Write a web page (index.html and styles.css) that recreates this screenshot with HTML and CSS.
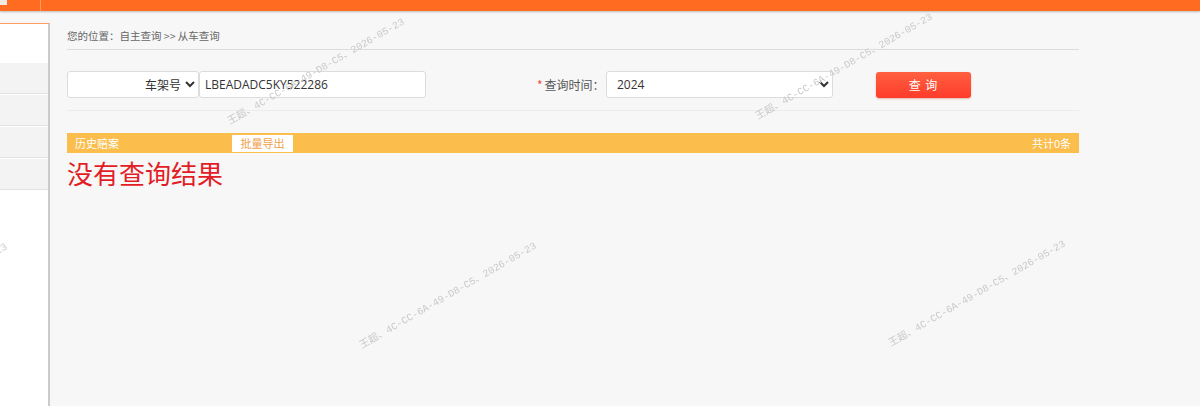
FILE: index.html
```html
<!DOCTYPE html>
<html lang="zh-CN">
<head>
    <meta charset="UTF-8">
    <meta name="viewport" content="width=device-width, initial-scale=1.0">
    <title>从车查询</title>
    <link rel="stylesheet" href="styles.css">
</head>
<body>
    <header class="topbar">
        <span class="topbar-logo"></span>
        <span class="topbar-sep"></span>
    </header>

    <div class="layout">
        <!-- 左侧菜单 -->
        <aside class="sidebar">
            <div class="menu-head"></div>
            <ul class="menu">
                <li></li>
                <li></li>
                <li></li>
                <li></li>
            </ul>
        </aside>

        <main class="main">
            <div class="crumb">您的位置：自主查询 &gt;&gt; 从车查询</div>

            <form class="query-form" onsubmit="return false">
                <select class="type-select">
                    <option>车架号</option>
                    <option>车牌号</option>
                </select>
                <input class="text-input" type="text" value="LBEADADC5KY522286">

                <label class="field-label"><em>*</em>查询时间：</label>
                <select class="year-select">
                    <option>2024</option>
                    <option>2023</option>
                </select>

                <button type="submit" class="btn-query">查 询</button>
            </form>

            <div class="result-bar">
                <span class="result-title">历史赔案</span>
                <button type="button" class="btn-export">批量导出</button>
                <span class="result-count">共计0条</span>
            </div>

            <div class="empty-tip">没有查询结果</div>
        </main>
    </div>

    <!-- 水印 -->
    <div class="watermarks">
        <span class="wm wm-1">王超、4C-CC-6A-49-D8-C5、2026-05-23</span>
        <span class="wm wm-2">王超、4C-CC-6A-49-D8-C5、2026-05-23</span>
        <span class="wm wm-3">王超、4C-CC-6A-49-D8-C5、2026-05-23</span>
        <span class="wm wm-4">王超、4C-CC-6A-49-D8-C5、2026-05-23</span>
        <span class="wm wm-5">王超、4C-CC-6A-49-D8-C5、2026-05-23</span>
    </div>
</body>
</html>
```

FILE: styles.css
```css
:root {
    --top-orange: #ff6b20;
    --bar-yellow: #fbbd4b;
    --line-gray: #dcdcdc;
    --text-gray: #666;
    --tip-red: #e31d26;
}

* {
    box-sizing: border-box;
}

body {
    margin: 0;
    background: #f7f7f7;
    color: #333;
    font-family: "Microsoft YaHei", "Noto Sans CJK SC", sans-serif;
    font-size: 12px;
    overflow: hidden;
}

.topbar {
    height: 11px;
    background: var(--top-orange);
    box-shadow: 0 1px 2px rgba(0,0,0,0.25);
    display: flex;
    position: relative;
    z-index: 2;
}

.topbar-logo {
    width: 7px;
    height: 5px;
    background: #f4e9e2;
}

.topbar-sep {
    width: 1px;
    height: 11px;
    margin-left: 33px;
    background: #ff9a66;
}

.layout {
    display: flex;
}

.sidebar {
    width: 50px;
    height: 383px;
    margin-top: 12px;
    background: #fff;
    border-top: 1px solid #ff9d63;
    border-right: 2px solid #cbcbcb;
    flex-shrink: 0;
}

.menu-head {
    height: 39px;
}

.menu {
    list-style: none;
    margin: 0;
    padding: 0;
}

.menu li {
    height: 31px;
    background: #f3f3f3;
    border-bottom: 1px solid #e2e2e2;
    box-shadow: 0 1px 0 #fff;
    margin-bottom: 1px;
}

.main {
    width: 1012px;
    margin-left: 17px;
}

.crumb {
    padding-top: 18px;
    padding-bottom: 6px;
    line-height: 14px;
    font-size: 10.5px;
    color: var(--text-gray);
    border-bottom: 1px solid var(--line-gray);
}

.query-form {
    display: flex;
    align-items: center;
    margin-top: 21px;
    padding-bottom: 12px;
    border-bottom: 1px solid #ececec;
}

.type-select,
.text-input,
.year-select {
    height: 27px;
    border: 1px solid #dcdcdc;
    border-radius: 3px;
    background: #fff;
    font-family: inherit;
    font-size: 12px;
    color: #333;
}

.type-select {
    width: 132px;
    text-align: right;
    text-align-last: right;
    padding-right: 1px;
}

.text-input {
    width: 227px;
    padding: 0 5px;
    font-family: "Open Sans", "Noto Sans CJK SC", sans-serif;
}

.field-label {
    width: 69px;
    margin-left: 111px;
    color: #555;
}

.field-label em {
    font-style: normal;
    color: #f04b3c;
    margin-right: 2px;
}

.year-select {
    width: 227px;
    padding-left: 6px;
    font-family: "Open Sans", "Noto Sans CJK SC", sans-serif;
}

.btn-query {
    width: 95px;
    height: 26px;
    margin-left: 43px;
    border: none;
    border-radius: 3px;
    background: linear-gradient(#ff6040, #ff3c2b);
    box-shadow: 0 1px 2px rgba(200,40,20,0.3);
    color: #fff;
    font-family: inherit;
    font-size: 12px;
    letter-spacing: 1px;
}

.result-bar {
    display: flex;
    align-items: center;
    height: 20px;
    margin-top: 22px;
    background: var(--bar-yellow);
    color: #fff;
    font-size: 11px;
}

.result-title {
    width: 165px;
    padding-left: 8px;
}

.btn-export {
    width: 61px;
    height: 17px;
    padding: 0;
    border: none;
    background: #fff;
    color: #f0a14c;
    font-family: inherit;
    font-size: 11px;
}

.result-count {
    margin-left: auto;
    padding-right: 8px;
}

.empty-tip {
    margin-top: 5px;
    line-height: 30px;
    font-size: 26px;
    color: var(--tip-red);
}

/* 水印层 */
.watermarks {
    position: fixed;
    inset: 0;
    pointer-events: none;
    z-index: 5;
}

.wm {
    position: absolute;
    line-height: 12px;
    white-space: nowrap;
    font-family: "Liberation Mono", "Noto Sans CJK SC", monospace;
    font-size: 10px;
    color: #c9c9c9;
    transform: rotate(-30deg);
    transform-origin: 0 100%;
}

.wm-1 { left: 232px; top: 116px; }
.wm-2 { left: 760px; top: 111px; }
.wm-3 { left: -165px; top: 341px; }
.wm-4 { left: 364px; top: 340px; }
.wm-5 { left: 893px; top: 338px; }
```
